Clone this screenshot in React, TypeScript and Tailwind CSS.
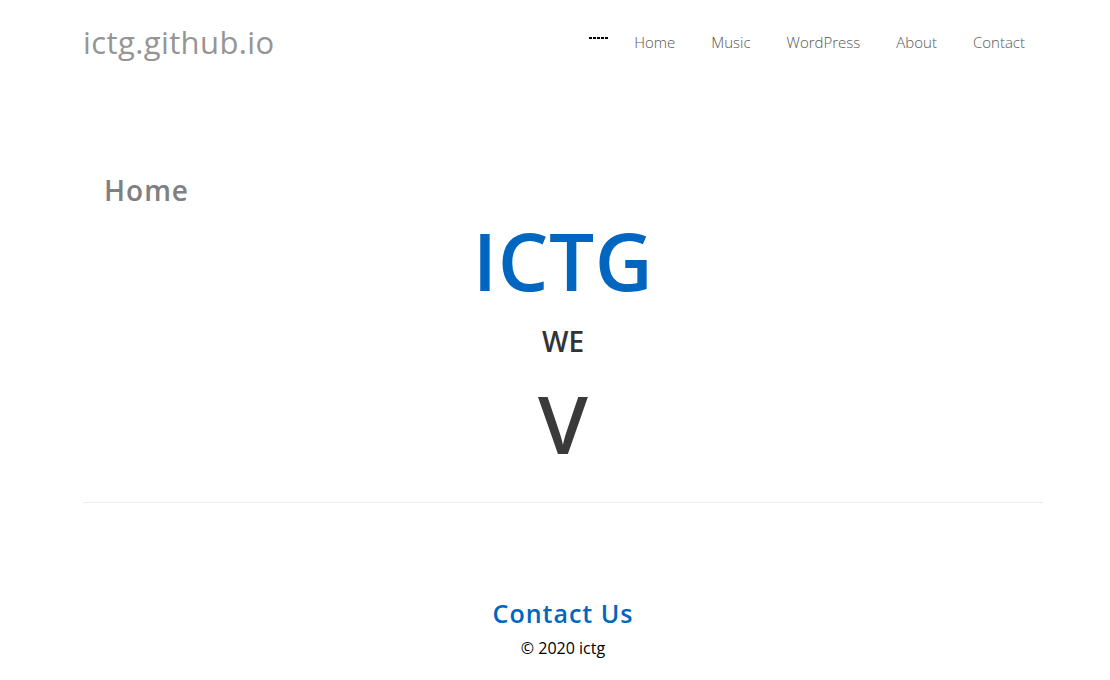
import React from "react";

const navItems = ["Home", "Music", "WordPress", "About", "Contact"];

const App: React.FC = () => {
  return (
    <div className="min-h-[680px] bg-white font-['Open_Sans','Noto_Sans',sans-serif]">
      <div className="ml-[83px] w-[960px]">
        {/* Header */}
        <header className="flex items-center justify-between h-[86px]">
          <a className="text-[31px] leading-none text-[#959595] tracking-[0.4px] -mt-[1px]">
            ictg.github.io
          </a>
          <nav className="flex items-center -mt-[2px]">
            <span className="mr-[8px] -mt-[8px] flex gap-[1px]">
              {[0, 1, 2, 3, 4].map((i) => (
                <span key={i} className="w-[3px] h-[2px] bg-black" />
              ))}
            </span>
            {navItems.map((item) => (
              <a
                key={item}
                className="px-[18px] text-[15px] font-light text-[#555] leading-none"
              >
                {item}
              </a>
            ))}
          </nav>
        </header>

        {/* Main */}
        <main className="pt-[90px]">
          <h2 className="pl-[21px] text-[28px] font-semibold tracking-[1px] text-[#808080] leading-none">
            Home
          </h2>
          <div className="flex flex-col items-center">
            <h1 className="mt-[16px] text-[80px] font-semibold tracking-[0.5px] text-[#0066c0] leading-none">
              ICTG
            </h1>
            <p className="mt-[27px] text-[28px] font-semibold text-[#333] leading-none">
              WE
            </p>
            <p className="mt-[28px] text-[80px] font-semibold text-[#3a3a3a] leading-none">
              V
            </p>
          </div>
          <hr className="mt-[39px] border-t border-[#ececec]" />
        </main>

        {/* Footer */}
        <footer className="flex flex-col items-center pt-[98px]">
          <h3 className="text-[25px] font-semibold tracking-[1px] text-[#0066c0] leading-none">
            Contact Us
          </h3>
          <p className="mt-[14px] text-[16px] text-black leading-none">
            © 2020 ictg
          </p>
        </footer>
      </div>
    </div>
  );
};

export default App;
